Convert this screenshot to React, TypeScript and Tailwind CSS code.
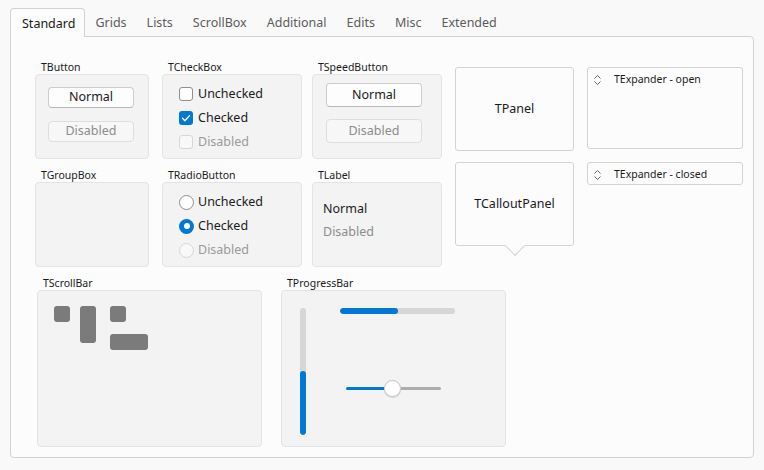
import React from 'react';

const tabs = ['Standard', 'Grids', 'Lists', 'ScrollBox', 'Additional', 'Edits', 'Misc', 'Extended'];

function Group({ label, w, h, children, className = '' }: { label: string; w: string; h: string; children?: React.ReactNode; className?: string }) {
  return (
    <div className={`flex flex-col ${w}`}>
      <div className="text-[10.5px] leading-[13px] pl-[6px] text-[#1a1a1a]">{label}</div>
      <div className={`${h} bg-[#f3f3f3] border border-[#e3e3e3] rounded-[4px] ${className}`}>{children}</div>
    </div>
  );
}

function CheckRow({ state, text }: { state: 'off' | 'on' | 'disabled'; text: string }) {
  return (
    <div className="flex items-center h-[24px] gap-[5px]">
      {state === 'on' ? (
        <div className="w-[14px] h-[14px] rounded-[3px] bg-[#0078d4] flex items-center justify-center">
          <svg width="14" height="14" viewBox="0 0 14 14">
            <path d="M3.5 7.3 L5.9 9.7 L10.5 4.6" fill="none" stroke="#fff" strokeWidth="1.4" strokeLinecap="round" strokeLinejoin="round" />
          </svg>
        </div>
      ) : (
        <div className={`w-[14px] h-[14px] rounded-[3px] border ${state === 'off' ? 'border-[#8f8f8f] bg-white' : 'border-[#d6d6d6] bg-[#f8f8f8]'}`} />
      )}
      <span className={`text-[12.5px] ${state === 'disabled' ? 'text-[#9a9a9a]' : 'text-[#1a1a1a]'}`}>{text}</span>
    </div>
  );
}

function RadioRow({ state, text }: { state: 'off' | 'on' | 'disabled'; text: string }) {
  return (
    <div className="flex items-center h-[24px] gap-[4px]">
      {state === 'on' ? (
        <div className="w-[15px] h-[15px] rounded-full bg-[#0078d4] flex items-center justify-center">
          <div className="w-[6px] h-[6px] rounded-full bg-white" />
        </div>
      ) : (
        <div className={`w-[15px] h-[15px] rounded-full border ${state === 'off' ? 'border-[#8f8f8f] bg-white' : 'border-[#d6d6d6] bg-[#f8f8f8]'}`} />
      )}
      <span className={`text-[12.5px] ${state === 'disabled' ? 'text-[#9a9a9a]' : 'text-[#1a1a1a]'}`}>{text}</span>
    </div>
  );
}

function Btn({ text, disabled, cls }: { text: string; disabled?: boolean; cls: string }) {
  return (
    <div
      className={`${cls} rounded-[4px] border flex items-center justify-center text-[12.5px] ${
        disabled ? 'border-[#dedede] bg-[#f7f7f7] text-[#8c8c8c]' : 'border-[#cdcdcd] border-b-[#b8b8b8] bg-[#fdfdfd] text-[#1a1a1a]'
      }`}
    >
      {text}
    </div>
  );
}

function ExpanderIcon() {
  return (
    <svg width="9" height="12" viewBox="0 0 9 12">
      <path d="M1.5 4.5 L4.5 1.5 L7.5 4.5 M1.5 7.5 L4.5 10.5 L7.5 7.5" fill="none" stroke="#666" strokeWidth="1" />
    </svg>
  );
}

function Expander({ text, h }: { text: string; h: string }) {
  return (
    <div className={`${h} w-[156px] border border-[#d3d3d3] rounded-[3px] bg-[#fcfcfc]`}>
      <div className="h-[23px] flex items-center pl-[5px] gap-[12px]">
        <ExpanderIcon />
        <span className="text-[10.5px] text-[#1a1a1a]">{text}</span>
      </div>
    </div>
  );
}

export default function App() {
  return (
    <div className="w-[764px] h-[470px] bg-[#f9f9f9] font-['Noto_Sans',sans-serif] px-[10px] pt-[8px] text-[#1a1a1a]">
      {/* tab strip */}
      <div className="flex h-[28px]">
        {tabs.map((t, i) =>
          i === 0 ? (
            <div key={t} className="relative z-10 -mb-px h-[29px] pl-[11px] pr-[9px] pt-[2px] flex items-center border border-b-0 border-[#d2d2d2] rounded-t-[4px] bg-[#fcfcfc] text-[12.5px] text-[#1a1a1a]">
              {t}
            </div>
          ) : (
            <div key={t} className="px-[10px] pt-[2px] flex items-center text-[12.5px] text-[#5c5c5c]">
              {t}
            </div>
          )
        )}
      </div>

      {/* page */}
      <div className="h-[422px] border border-[#d2d2d2] rounded-b-[4px] rounded-tr-[4px] bg-[#fcfcfc] flex flex-col pl-[24px] pt-[24px]">
        <div className="flex">
          <div className="flex flex-col">
            <div className="flex">
              <Group label="TButton" w="w-[114px]" h="h-[85px]" className="pl-[12px] pt-[12px] flex flex-col gap-[13px]">
                <Btn text="Normal" cls="w-[86px] h-[21px]" />
                <Btn text="Disabled" disabled cls="w-[86px] h-[21px]" />
              </Group>
              <Group label="TCheckBox" w="w-[140px] ml-[13px]" h="h-[85px]" className="pl-[16px] pt-[7px]">
                <CheckRow state="off" text="Unchecked" />
                <CheckRow state="on" text="Checked" />
                <CheckRow state="disabled" text="Disabled" />
              </Group>
              <Group label="TSpeedButton" w="w-[130px] ml-[10px]" h="h-[85px]" className="pl-[13px] pt-[8px] flex flex-col gap-[12px]">
                <Btn text="Normal" cls="w-[96px] h-[24px]" />
                <Btn text="Disabled" disabled cls="w-[96px] h-[24px]" />
              </Group>
            </div>

            <div className="flex mt-[10px]">
              <Group label="TGroupBox" w="w-[114px]" h="h-[85px]" />
              <Group label="TRadioButton" w="w-[140px] ml-[13px]" h="h-[85px]" className="pl-[16px] pt-[7px]">
                <RadioRow state="off" text="Unchecked" />
                <RadioRow state="on" text="Checked" />
                <RadioRow state="disabled" text="Disabled" />
              </Group>
              <Group label="TLabel" w="w-[130px] ml-[10px]" h="h-[85px]" className="pl-[10px] pt-[14px] text-[12.5px] leading-[23px]">
                <div className="text-[#1a1a1a]">Normal</div>
                <div className="text-[#8c8c8c]">Disabled</div>
              </Group>
            </div>
          </div>

          <div className="flex flex-col ml-[13px] mt-[6px] gap-[11px]">
            <div className="w-[119px] h-[84px] border border-[#d3d3d3] rounded-[3px] bg-[#fcfcfc] flex items-center justify-center text-[12.5px]">
              TPanel
            </div>
            <div className="relative w-[119px] h-[84px] border border-[#d3d3d3] rounded-[3px] bg-[#fcfcfc] flex items-center justify-center text-[12.5px]">
              TCalloutPanel
              <div className="absolute left-[52px] bottom-[-8px] w-[14px] h-[14px] rotate-45 bg-[#fcfcfc] border-r border-b border-[#d3d3d3]" />
            </div>
          </div>

          <div className="flex flex-col ml-[13px] mt-[6px] gap-[13px]">
            <Expander text="TExpander - open" h="h-[82px]" />
            <Expander text="TExpander - closed" h="h-[23px]" />
          </div>
        </div>

        <div className="flex gap-[19px] mt-[10px] ml-[2px]">
          <Group label="TScrollBar" w="w-[225px]" h="h-[157px]" className="flex pl-[16px] pt-[15px] gap-[10px]">
            <div className="w-[16px] h-[16px] rounded-[3px] bg-[#7b7b7b]" />
            <div className="w-[16px] h-[37px] rounded-[3px] bg-[#7b7b7b] mr-[4px]" />
            <div className="flex flex-col gap-[12px]">
              <div className="w-[16px] h-[16px] rounded-[3px] bg-[#7b7b7b]" />
              <div className="w-[38px] h-[16px] rounded-[3px] bg-[#7b7b7b]" />
            </div>
          </Group>
          <Group label="TProgressBar" w="w-[225px]" h="h-[157px]" className="flex pl-[18px] pt-[17px]">
            <div className="w-[6px] h-[127px] rounded-full bg-[#d6d6d6] flex flex-col justify-end overflow-hidden">
              <div className="h-[64px] bg-[#0078d4] rounded-full" />
            </div>
            <div className="flex flex-col ml-[34px]">
              <div className="w-[115px] h-[6px] rounded-full bg-[#d6d6d6] overflow-hidden">
                <div className="w-[58px] h-[6px] bg-[#0078d4] rounded-full" />
              </div>
              <div className="flex items-center ml-[6px] mt-[64px] h-[20px]">
                <div className="w-[38px] h-[3px] bg-[#0078d4] rounded-l-full" />
                <div className="w-[17px] h-[17px] rounded-full bg-white border border-[#c4c4c4] shadow-[0_1px_1px_rgba(0,0,0,0.12)]" />
                <div className="w-[40px] h-[3px] bg-[#adadad] rounded-r-full" />
              </div>
            </div>
          </Group>
        </div>
      </div>
    </div>
  );
}
